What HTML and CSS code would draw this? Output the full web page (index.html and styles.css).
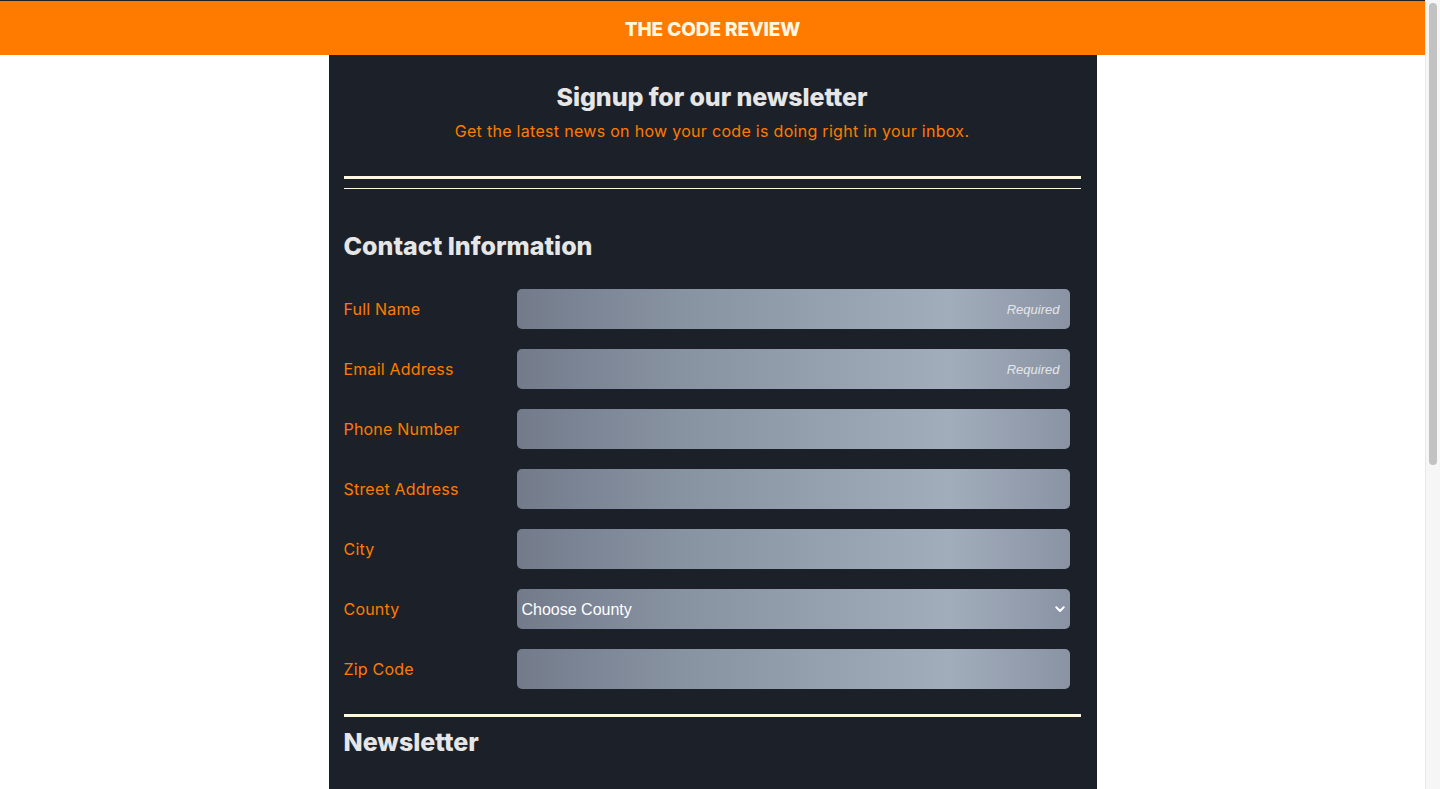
FILE: index.html
```html
<!DOCTYPE html>
<html lang="en">
<head>
<meta charset="utf-8">
<title>The Code Review</title>
<link rel="stylesheet" href="styles.css">
</head>
<body>
<div class="page">
<header class="site-header">
  <h1 class="brand">THE CODE REVIEW</h1>
</header>
<main class="container">
  <section class="intro">
    <h2 class="intro-title">Signup for our newsletter</h2>
    <p class="intro-sub">Get the latest news on how your code is doing right in your inbox.</p>
  </section>
  <hr class="rule-thick rule-top">
  <hr class="rule-thin">
  <form class="signup">
    <h2 class="section-title contact-title">Contact Information</h2>
    <div class="row">
      <label class="label" for="name">Full Name</label>
      <input class="field" id="name" type="text" placeholder="Required">
    </div>
    <div class="row">
      <label class="label" for="email">Email Address</label>
      <input class="field" id="email" type="email" placeholder="Required">
    </div>
    <div class="row">
      <label class="label" for="phone">Phone Number</label>
      <input class="field" id="phone" type="tel">
    </div>
    <div class="row">
      <label class="label" for="street">Street Address</label>
      <input class="field" id="street" type="text">
    </div>
    <div class="row">
      <label class="label" for="city">City</label>
      <input class="field" id="city" type="text">
    </div>
    <div class="row">
      <label class="label" for="county">County</label>
      <div class="select-wrap">
        <select class="field select" id="county">
          <option>Choose County</option>
          <option>Antrim</option>
          <option>Armagh</option>
          <option>Down</option>
        </select>
        <svg class="chev" width="10" height="7" viewBox="0 0 10 7"><path d="M1.3 1.3 L5 5 L8.7 1.3" fill="none" stroke="#fff" stroke-width="2" stroke-linecap="round" stroke-linejoin="round"/></svg>
      </div>
    </div>
    <div class="row">
      <label class="label" for="zip">Zip Code</label>
      <input class="field" id="zip" type="text">
    </div>
    <hr class="rule-thick rule-news">
    <h2 class="section-title news-title">Newsletter</h2>
    <div class="news-more">
      <p class="news-q">Select the newsletters you would like to receive</p>
      <div class="checks">
        <label class="check"><input type="checkbox"> HTML News</label>
        <label class="check"><input type="checkbox"> CSS News</label>
        <label class="check"><input type="checkbox"> JavaScript News</label>
      </div>
      <p class="news-q">Newsletter format</p>
      <div class="checks">
        <label class="check"><input type="radio" name="fmt"> HTML</label>
        <label class="check"><input type="radio" name="fmt"> Plain text</label>
      </div>
      <button class="submit" type="button">Sign Up</button>
    </div>
  </form>
</main>
</div>
<div class="scrollbar" aria-hidden="true"><div class="thumb"></div></div>
</body>
</html>
```
FILE: styles.css
```css
html, body {
  margin: 0;
  padding: 0;
}
body {
  background: #ffffff;
  font-family: "Inter", "Noto Sans", sans-serif;
}
.page {
  margin-right: 15px;
}
.scrollbar {
  position: fixed;
  top: 0;
  right: 0;
  width: 15px;
  height: 100vh;
  background: #f6f6f6;
  border-left: 1px solid #e8e8e8;
  box-sizing: border-box;
  padding: 3px 3px 0 3px;
}
.thumb {
  width: 8px;
  height: 462px;
  border-radius: 4px;
  background: #c2c2c2;
}
.site-header {
  background: #ff7b00;
  border-top: 1px solid #1c2129;
  height: 54px;
  display: flex;
  align-items: center;
  justify-content: center;
}
.brand {
  margin: 0;
  color: #fff8e1;
  font-size: 19px;
  font-weight: 800;
  letter-spacing: -0.1px;
  padding-top: 2px;
}
.container {
  width: 768px;
  margin: 0 auto;
  background: #1c2129;
  padding: 0 16px 40px 15px;
  box-sizing: border-box;
}
.intro {
  text-align: center;
  padding-top: 26px;
}
.intro-title {
  margin: 0;
  color: #e6e6e6;
  font-size: 25px;
  font-weight: 800;
  line-height: 32px;
  letter-spacing: -0.1px;
}
.intro-sub {
  margin: 6px 0 0;
  color: #ff7b00;
  font-size: 16px;
  line-height: 24px;
  letter-spacing: 0.3px;
}
.rule-thick {
  border: 0;
  height: 3px;
  margin: 0;
  background: #fff8e1;
}
.rule-top {
  margin-top: 33px;
}
.rule-thin {
  margin: 9px 0 0;
  border: 0;
  height: 1px;
  background: #fff8e1;
}
.signup {
  display: flex;
  flex-direction: column;
}
.section-title {
  margin: 0;
  color: #e6e6e6;
  font-size: 25px;
  font-weight: 800;
  line-height: 32px;
}
.contact-title {
  margin-top: 41px;
  margin-bottom: 27px;
}
.row {
  display: grid;
  grid-template-columns: 173px 553px;
  align-items: center;
  height: 40px;
  margin-bottom: 20px;
}
.label {
  color: #ff7b00;
  font-size: 16px;
  letter-spacing: 0.2px;
}
.field {
  box-sizing: border-box;
  width: 553px;
  height: 40px;
  border: 0;
  border-radius: 5px;
  background: linear-gradient(90deg, #737b8b 0%, #8893a2 30%, #a2adbc 78%, #8a93a3 100%);
  padding: 0 10px 0 5px;
  font-family: "Liberation Sans", Arial, sans-serif;
  font-size: 16px;
  color: #ffffff;
  outline: none;
}
.field::placeholder {
  color: #e4e6ea;
  font-style: italic;
  font-size: 13px;
  text-align: right;
}
.select-wrap {
  position: relative;
  width: 553px;
  height: 40px;
}
.select {
  appearance: none;
  -webkit-appearance: none;
  display: block;
}
.chev {
  position: absolute;
  right: 5px;
  top: 17px;
  pointer-events: none;
}
.rule-news {
  margin-top: 5px;
}
.news-title {
  margin-top: 9px;
}
.news-more {
  display: flex;
  flex-direction: column;
  padding-top: 60px;
}
.news-q {
  color: #ff7b00;
  margin: 0 0 12px;
  font-size: 16px;
}
.checks {
  display: flex;
  flex-direction: column;
  gap: 10px;
  margin-bottom: 24px;
}
.check {
  color: #e6e6e6;
  font-size: 16px;
  display: flex;
  align-items: center;
  gap: 8px;
}
.submit {
  margin-top: 10px;
  align-self: center;
  background: #ff7b00;
  color: #fff8e1;
  border: 0;
  border-radius: 5px;
  padding: 12px 40px;
  font-family: inherit;
  font-weight: 800;
  font-size: 16px;
}
```
